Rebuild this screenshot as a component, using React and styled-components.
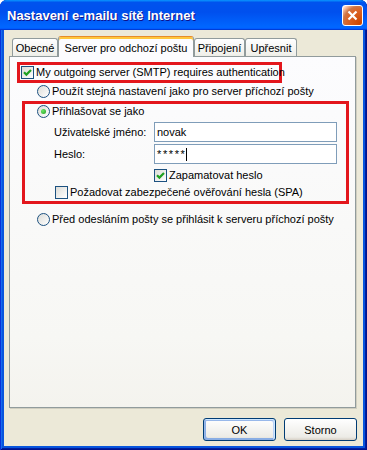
import React from "react";
import styled, { createGlobalStyle } from "styled-components";

const GlobalStyle = createGlobalStyle`
  html, body {
    margin: 0;
    padding: 0;
    background: #ffffff;
  }
  * {
    box-sizing: border-box;
  }
`;

const Window = styled.div`
  width: 367px;
  height: 450px;
  display: flex;
  flex-direction: column;
  background: #0855dd;
  border-radius: 7px 7px 0 0;
  overflow: hidden;
  box-shadow: inset 1px 0 #0831d9, inset -1px 0 #00138c, inset 0 -1px #00138c,
    inset 2px 0 #166aee, inset -2px 0 #001ea0, inset 0 -2px #001ea0;
  font-family: "Liberation Sans", Arial, sans-serif;
  font-size: 11px;
  color: #000;
`;

const TitleBar = styled.div`
  height: 30px;
  flex: none;
  display: flex;
  align-items: center;
  justify-content: space-between;
  padding: 1px 4px 0 7px;
  background: linear-gradient(
    180deg,
    #0997ff,
    #0053ee 8%,
    #0050ee 40%,
    #0066ff 88%,
    #0066ff 93%,
    #005bff 95%,
    #003dd7 96%,
    #003dd7
  );
`;

const Title = styled.div`
  color: #fff;
  font-weight: bold;
  font-size: 13px;
  text-shadow: 1px 1px #0f1089;
`;

const CloseButton = styled.div`
  width: 21px;
  height: 21px;
  border: 1px solid #fff;
  border-radius: 3px;
  display: flex;
  align-items: center;
  justify-content: center;
  background: radial-gradient(
    circle at 90% 90%,
    #cc4600 0%,
    #dc6527 55%,
    #cd7546 70%,
    #ffccb2 90%,
    #fff 100%
  );
`;

const Body = styled.div`
  flex: 1;
  margin: 0 4px 4px;
  background: #ece9d8;
  display: flex;
  flex-direction: column;
  padding: 6px 6px 5px 5px;
`;

const TabRow = styled.div`
  height: 20px;
  display: flex;
  align-items: flex-end;
  padding-left: 3px;
  position: relative;
  z-index: 1;
`;

const Tab = styled.div`
  width: ${(p) => p.$w}px;
  height: ${(p) => (p.$active ? 21 : 18)}px;
  margin-bottom: ${(p) => (p.$active ? -1 : 0)}px;
  display: flex;
  align-items: center;
  justify-content: center;
  padding-top: ${(p) => (p.$active ? 1 : 0)}px;
  border: 1px solid #919b9c;
  border-bottom: none;
  border-radius: 3px 3px 0 0;
  background: ${(p) =>
    p.$active
      ? "#fcfcfe"
      : "linear-gradient(180deg, #fff, #fafaf9 26%, #f0f0ea 95%, #ecebe5)"};
  border-top-color: ${(p) => (p.$active ? "#e68b2c" : "#919b9c")};
  box-shadow: ${(p) => (p.$active ? "inset 0 2px #ffc73c" : "none")};
  white-space: nowrap;
`;

const Panel = styled.div`
  flex: 1;
  margin-right: 1px;
  border: 1px solid #919b9c;
  background: linear-gradient(180deg, #fcfcfe 0%, #f7f7f4 80%, #f4f3ee 100%);
  box-shadow: 1px 1px 0 #d0cec0;
  display: flex;
  flex-direction: column;
  align-items: flex-start;
`;

const Highlight = styled.div`
  border: 3px solid #e3161c;
  width: ${(p) => p.$w}px;
  margin: ${(p) => p.$m};
  padding: ${(p) => p.$pad};
  display: flex;
  flex-direction: column;
  align-items: flex-start;
`;

const Option = styled.label`
  height: 15px;
  display: flex;
  align-items: center;
  gap: 2px;
  margin: ${(p) => p.$m || "0"};
  line-height: 15px;
  white-space: nowrap;
`;

const Box = styled.span`
  width: 13px;
  height: 13px;
  flex: none;
  border: 1px solid #1c5180;
  border-radius: ${(p) => (p.$round ? "50%" : "0")};
  background: linear-gradient(135deg, #dcdcd7, #fff);
  display: flex;
  align-items: center;
  justify-content: center;
`;

const Dot = styled.span`
  width: 5px;
  height: 5px;
  border-radius: 50%;
  background: radial-gradient(circle at 35% 35%, #6be567, #21a121);
`;

const FieldGrid = styled.div`
  display: grid;
  grid-template-columns: 100px 183px;
  row-gap: 2px;
  align-items: center;
  margin: 3px 0 0 17px;
`;

const Field = styled.div`
  height: 20px;
  border: 1px solid #7f9db9;
  background: #fff;
  display: flex;
  align-items: center;
  padding: 0 2px;
  letter-spacing: ${(p) => (p.$secret ? "1.6px" : "0")};
`;

const Caret = styled.span`
  width: 1px;
  height: 13px;
  background: #000;
`;

const ButtonRow = styled.div`
  display: flex;
  justify-content: flex-end;
  gap: 8px;
  margin-top: 10px;
`;

const Button = styled.div`
  width: 73px;
  height: 23px;
  border: 1px solid #003c74;
  border-radius: 3px;
  display: flex;
  align-items: center;
  justify-content: center;
  background: linear-gradient(180deg, #fff, #ecebe6 86%, #d6d0c5);
  box-shadow: ${(p) =>
    p.$default
      ? "inset -1px 1px #cee7ff, inset 1px 2px #98b8ea, inset -2px 2px #bcd4f6, inset 1px -1px #89ade4, inset 2px -2px #89ade4"
      : "none"};
`;

const Check = ({ checked }) => (
  <Box>
    {checked && (
      <svg width="9" height="9" viewBox="0 0 9 9">
        <path d="M1 4.2 L3.4 6.6 L8 2" fill="none" stroke="#21a121" strokeWidth="2.2" />
      </svg>
    )}
  </Box>
);

const Radio = ({ checked }) => <Box $round>{checked && <Dot />}</Box>;

export default function App() {
  return (
    <>
      <GlobalStyle />
      <Window>
        <TitleBar>
          <Title>Nastavení e-mailu sítě Internet</Title>
          <CloseButton>
            <svg width="11" height="11" viewBox="0 0 11 11">
              <path d="M1.5 1.5 L9.5 9.5 M9.5 1.5 L1.5 9.5" stroke="#fff" strokeWidth="2.2" />
            </svg>
          </CloseButton>
        </TitleBar>
        <Body>
          <TabRow>
            <Tab $w={46}>Obecné</Tab>
            <Tab $w={136} $active>
              Server pro odchozí poštu
            </Tab>
            <Tab $w={51}>Připojení</Tab>
            <Tab $w={52}>Upřesnit</Tab>
          </TabRow>
          <Panel>
            <Highlight $w={265} $m="5px 0 0 7px" $pad="0 0 0 1px">
              <Option>
                <Check checked />
                My outgoing server (SMTP) requires authentication
              </Option>
            </Highlight>
            <Option $m="1px 0 0 27px">
              <Radio />
              Použít stejná nastavení jako pro server příchozí pošty
            </Option>
            <Highlight $w={327} $m="2px 0 0 12px" $pad="0 0 1px 12px">
              <Option>
                <Radio checked />
                Přihlašovat se jako
              </Option>
              <FieldGrid>
                <span>Uživatelské jméno:</span>
                <Field>novak</Field>
                <span>Heslo:</span>
                <Field $secret>
                  *****
                  <Caret />
                </Field>
              </FieldGrid>
              <Option $m="4px 0 0 117px">
                <Check checked />
                Zapamatovat heslo
              </Option>
              <Option $m="2px 0 0 18px">
                <Check />
                Požadovat zabezpečené ověřování hesla (SPA)
              </Option>
            </Highlight>
            <Option $m="8px 0 0 27px">
              <Radio />
              Před odesláním pošty se přihlásit k serveru příchozí pošty
            </Option>
          </Panel>
          <ButtonRow>
            <Button $default>OK</Button>
            <Button>Storno</Button>
          </ButtonRow>
        </Body>
      </Window>
    </>
  );
}
